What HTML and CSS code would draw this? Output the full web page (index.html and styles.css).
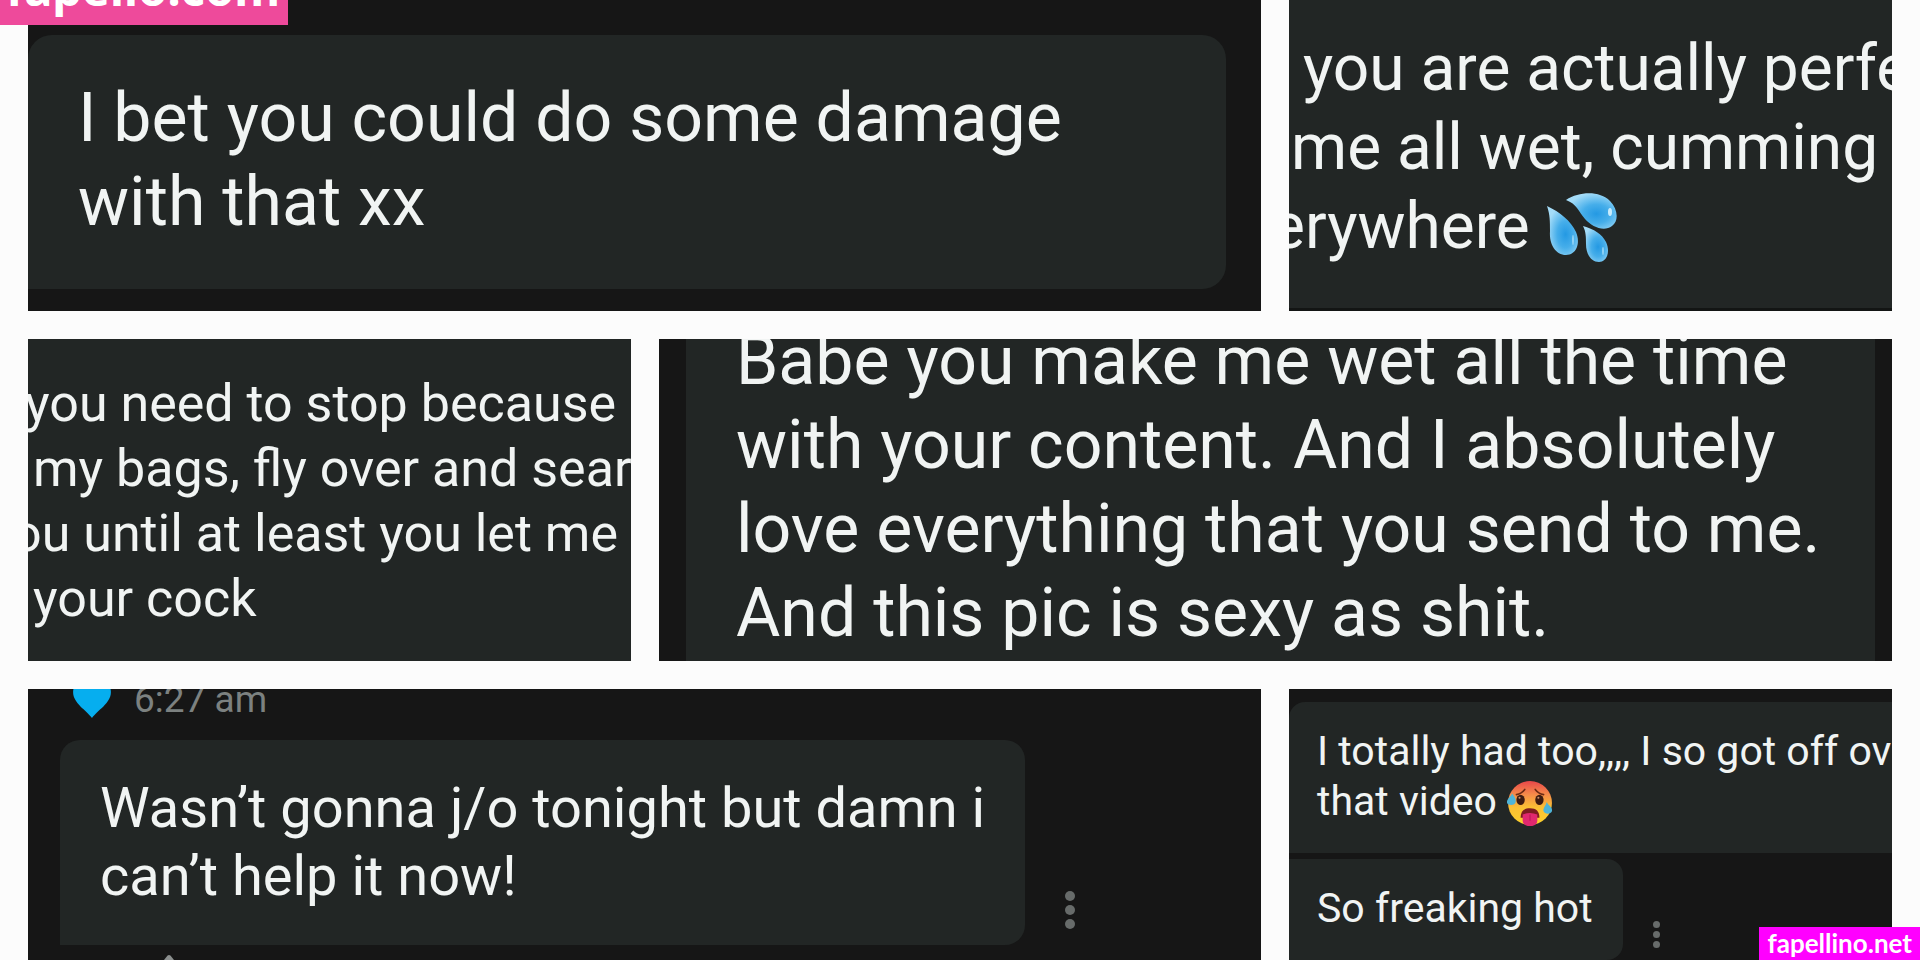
FILE: index.html
```html
<!DOCTYPE html>
<html lang="en">
<head>
    <meta charset="UTF-8">
    <meta name="viewport" content="width=device-width, initial-scale=1.0">
    <title>Messages</title>
    <link rel="stylesheet" href="styles.css">
</head>
<body>
    <div class="site-tag tag-top">fapello.com</div>

    <main class="collage">
        <!-- top row -->
        <div class="row">
            <section class="tile tile-damage">
                <p class="bubble size-xl">I bet you could do some damage<br>with that xx</p>
            </section>
            <section class="tile tile-perfect">
                <p class="cropped size-lg">
                    <span class="line in">you are actually perfe</span>
                    <span class="line">me all wet, cumming</span>
                    <span class="line out">erywhere <svg class="emoji" viewBox="0 0 72 72" role="img" aria-label="sweat drops">
                        <defs>
                            <radialGradient id="drop" cx="60%" cy="58%" r="60%">
                                <stop offset="0" stop-color="#2499e3"/>
                                <stop offset="0.45" stop-color="#46aeea"/>
                                <stop offset="1" stop-color="#a4dcf8"/>
                            </radialGradient>
                        </defs>
                        <path fill="url(#drop)" d="M20 8C34 -1 54 -1 64 9c8 8 9 20 2 25-8 6-20 1-27-7C32 19 31 12 20 8z"/>
                        <path fill="url(#drop)" d="M1 14c13 6 24 15 29 26 5 12 0 23-10 23S3 53 4 39C4 29 4 23 1 14z"/>
                        <path fill="url(#drop)" d="M37 34c11 3 19 8 23 16 5 11 0 20-7 20-8 0-13-8-13-18 0-7 0-12-3-18z"/>
                        <ellipse cx="64" cy="20" rx="2" ry="4" fill="#c9ecfc"/>
                        <ellipse cx="27" cy="48" rx="1" ry="5" fill="#8fd2f5"/>
                        <ellipse cx="57" cy="59" rx="1" ry="4" fill="#8fd2f5"/>
                    </svg></span>
                </p>
            </section>
        </div>

        <!-- middle row -->
        <div class="row flipped">
            <section class="tile tile-bags">
                <p class="cropped size-md">
                    <span class="line edge">you need to stop because</span>
                    <span class="line in">my bags, fly over and sear</span>
                    <span class="line out">ou until at least you let me</span>
                    <span class="line in">your cock</span>
                </p>
            </section>
            <section class="tile tile-babe">
                <p class="bubble size-xl">Babe you make me wet all the time<br>with your content. And I absolutely<br>love everything that you send to me.<br>And this pic is sexy as shit.</p>
            </section>
        </div>

        <!-- bottom row -->
        <div class="row">
            <section class="tile tile-tonight">
                <div class="meta">
                    <svg class="heart" viewBox="0 0 42 40" aria-hidden="true">
                        <path fill="#06aeef" d="M21 40C15 31 0 24 0 11 0 4 5 0 11 0c5 0 8 3 10 6 2-3 5-6 10-6 6 0 11 4 11 11 0 13-15 20-21 29z"/>
                    </svg>
                    <time>6:27 am</time>
                </div>
                <div class="message">
                    <p class="bubble size-base">Wasn’t gonna j/o tonight but damn i<br>can’t help it now!</p>
                    <button class="more" aria-label="More"><i></i><i></i><i></i></button>
                </div>
                <svg class="next-icon" viewBox="0 0 12 6" aria-hidden="true"><path fill="#8b8f8e" d="M0 6 4 1q2-2 4 0l4 5z"/></svg>
            </section>
            <section class="tile tile-video">
                <p class="bubble size-sm long">I totally had too,,,, I so got off ove<br>that video <svg class="emoji" viewBox="0 0 44 44" role="img" aria-label="hot face">
                    <defs>
                        <linearGradient id="heat" x1="0" y1="0" x2="0" y2="1">
                            <stop offset="0" stop-color="#e8474a"/>
                            <stop offset="0.3" stop-color="#f58a4a"/>
                            <stop offset="0.6" stop-color="#fbc034"/>
                            <stop offset="1" stop-color="#fbd02c"/>
                        </linearGradient>
                    </defs>
                    <circle cx="22" cy="22" r="21" fill="url(#heat)"/>
                    <path d="M9 14q5-1 8-5M35 14q-5-1-8-5" fill="none" stroke="#6b2a14" stroke-width="1.5" stroke-linecap="round"/>
                    <ellipse cx="13" cy="19" rx="4" ry="5" fill="#3c1c12"/>
                    <ellipse cx="31" cy="19" rx="4" ry="5" fill="#3c1c12"/>
                    <circle cx="12" cy="17" r="1" fill="#c98d68"/>
                    <circle cx="30" cy="17" r="1" fill="#c98d68"/>
                    <path d="M13 36c0-6 3-9 9-9s9 3 9 9z" fill="#7d1c20"/>
                    <path d="M15 33q7-3 14 0v6c0 7-14 7-14 0z" fill="#e0286f"/>
                    <path d="M22 33v6" stroke="#b81655" stroke-width="1"/>
                    <path d="M5 13c3 4 4 6 3 9-1 2-6 3-8 0-1-3 3-5 5-9z" fill="#4fb4d8"/>
                    <path d="M38 21c2 4 6 5 5 9-1 3-7 3-8 0-1-3 2-5 3-9z" fill="#4fb4d8"/>
                </svg></p>
                <div class="message">
                    <p class="bubble size-sm">So freaking hot</p>
                    <button class="more small" aria-label="More"><i></i><i></i><i></i></button>
                </div>
            </section>
        </div>
    </main>

    <div class="site-tag tag-bottom">fapellino.net</div>
</body>
</html>
```
FILE: styles.css
```css
* {
    box-sizing: border-box;
}

body {
    margin: 0;
    font-family: Roboto, "Liberation Sans", sans-serif;
    color: #f1f4f3;
    background: #fcfcfc;
}

p {
    margin: 0;
}

.collage {
    display: grid;
    grid-template-rows: 311fr 322fr 271fr;
    gap: 28px;
    height: 100vh;
    padding: 0 28px;
}

/* wide tile first, narrow second; flipped swaps them */
.row {
    display: grid;
    grid-template-columns: minmax(0, 1233fr) minmax(0, 603fr);
    gap: 28px;
    min-height: 0;
}

.row.flipped {
    grid-template-columns: minmax(0, 603fr) minmax(0, 1233fr);
}

.tile {
    min-height: 0;
    overflow: hidden;
    background: #161616;
}

/* text sizes */
.size-xl {
    font-size: 68px;
    line-height: 84px;
}

.size-lg {
    font-size: 64px;
    line-height: 79px;
}

.size-base {
    font-size: 56px;
    line-height: 68px;
}

.size-md {
    font-size: 52px;
    line-height: 65px;
}

.size-sm {
    font-size: 41px;
    line-height: 50px;
}

.bubble {
    background: #222625;
    white-space: nowrap;
}

/* messages cut off by the tile on both sides */
.cropped {
    white-space: nowrap;
}

.line {
    display: block;
}

.emoji {
    display: inline-block;
}

/* tiles */
.tile-damage {
    padding: 35px 35px 22px 0;
}

.tile-damage .bubble {
    height: 100%;
    padding: 41px 50px;
    border-radius: 24px 24px 24px 0;
}

.tile-perfect {
    padding: 29px 0 0 2px;
    background: #222625;
    border-bottom: 3px solid #131514;
}

.tile-perfect .in {
    margin-left: 12px;
}

.tile-perfect .out {
    margin-left: -20px;
}

.tile-perfect .emoji {
    width: 72px;
    height: 72px;
    vertical-align: -6px;
    margin: -10px 0;
}

.tile-bags {
    padding: 32px 0 0;
    background: #222625;
}

.tile-bags .in {
    margin-left: 5px;
}

.tile-bags .edge {
    margin-left: -3px;
}

.tile-bags .out {
    margin-left: -16px;
}

.tile-babe {
    padding: 0 17px 0 27px;
}

.tile-babe .bubble {
    margin-top: -61px;
    padding: 41px 50px;
}

.tile-tonight {
    position: relative;
    padding: 0 32px;
}

.meta {
    display: flex;
    align-items: center;
    gap: 22px;
    margin: -11px 0 18px;
    padding-left: 12px;
    font-size: 37px;
    line-height: 44px;
    color: #7c8180;
}

.heart {
    width: 40px;
    height: 36px;
}

.message {
    display: flex;
    align-items: flex-end;
}

.tile-tonight .bubble {
    width: 965px;
    padding: 34px 40px 35px;
    border-radius: 20px 20px 20px 0;
}

.more {
    display: flex;
    flex-direction: column;
    gap: 4px;
    margin: 0 0 16px 40px;
    padding: 0;
    border: none;
    background: none;
    cursor: pointer;
}

.more i {
    width: 10px;
    height: 10px;
    border-radius: 50%;
    background: #676b6a;
}

.more.small {
    gap: 3px;
    margin: 0 0 12px 30px;
}

.more.small i {
    width: 7px;
    height: 7px;
}

.next-icon {
    position: absolute;
    left: 135px;
    bottom: 0;
    width: 12px;
    height: 5px;
}

.tile-video {
    padding-top: 13px;
}

.tile-video .bubble {
    padding: 24px 28px 27px;
    border-radius: 0 16px 16px 0;
}

.tile-video .long {
    margin-bottom: 6px;
    border-radius: 16px 0 0 0;
}

.tile-video .message .bubble {
    width: 334px;
}

.tile-video .emoji {
    width: 46px;
    height: 46px;
    vertical-align: -5px;
    margin: -6px 0;
}

/* site labels over the corners */
.site-tag {
    position: absolute;
    z-index: 1;
    color: #fff;
    font-weight: bold;
    white-space: nowrap;
}

.tag-top {
    top: -37px;
    left: 0;
    width: 288px;
    padding: 0 6px 12px;
    background: #ee4a9b;
    font-family: "Noto Sans", sans-serif;
    font-size: 47px;
    line-height: 50px;
}

.tag-bottom {
    right: 0;
    bottom: 0;
    padding: 0 8px;
    background: #f0f;
    font-family: Lato, sans-serif;
    font-size: 26px;
    line-height: 33px;
}
```
